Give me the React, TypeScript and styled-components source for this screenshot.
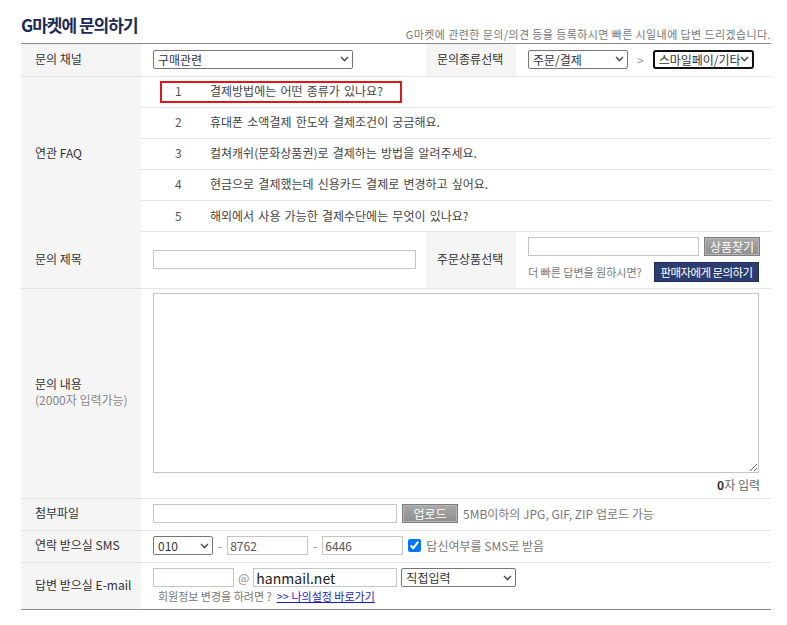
import React from 'react';
import styled, { createGlobalStyle } from 'styled-components';

const Global = createGlobalStyle`
  body {
    margin: 0;
    background: #fff;
    font-family: "Noto Sans CJK KR", "Noto Sans", sans-serif;
    font-size: 12px;
    color: #333;
  }
`;

const Page = styled.div`
  width: 750px;
  margin-left: 21px;
  padding-top: 14px;
`;

const Header = styled.div`
  height: 29px;
  display: flex;
  align-items: flex-end;
  justify-content: space-between;
`;

const Title = styled.h1`
  margin: 0 0 8px;
  font-size: 17px;
  line-height: 20px;
  font-weight: 700;
  letter-spacing: -1px;
  color: #1c2b52;
`;

const Notice = styled.p`
  margin: 0 0 2px;
  font-size: 11px;
  line-height: 14px;
  color: #777;
  letter-spacing: 0.4px;
  white-space: nowrap;
`;

const Form = styled.div`
  border-top: 1px solid #8a8a8a;
  border-bottom: 1px solid #8a8a8a;
`;

const Row = styled.div<{ $h: number; $split?: boolean; $last?: boolean }>`
  display: grid;
  grid-template-columns: ${(p) => (p.$split ? '120px 285px 90px 255px' : '120px 630px')};
  height: ${(p) => p.$h}px;
  box-sizing: border-box;
  border-bottom: ${(p) => (p.$last ? 'none' : '1px solid #e3e3e3')};
`;

const Label = styled.div<{ $pad?: number }>`
  background: #f5f5f5;
  display: flex;
  flex-direction: column;
  justify-content: center;
  padding-left: ${(p) => p.$pad ?? 14}px;
  padding-bottom: 3px;
  color: #333;
  line-height: 16px;
`;

const SubLabel = styled.span`
  color: #888;
`;

const Cell = styled.div<{ $col?: boolean; $gap?: number; $top?: number }>`
  display: flex;
  flex-direction: ${(p) => (p.$col ? 'column' : 'row')};
  justify-content: ${(p) => (p.$top !== undefined ? 'flex-start' : p.$col ? 'center' : 'flex-start')};
  align-items: ${(p) => (p.$col ? 'flex-start' : 'center')};
  padding-left: 12px;
  padding-top: ${(p) => p.$top ?? 0}px;
  padding-bottom: ${(p) => (p.$top !== undefined ? 0 : 2)}px;
  gap: ${(p) => p.$gap ?? 5}px;
  min-width: 0;
`;

const Line = styled.div<{ $w?: number; $gap?: number }>`
  display: flex;
  align-items: center;
  justify-content: ${(p) => (p.$w ? 'space-between' : 'flex-start')};
  width: ${(p) => (p.$w ? `${p.$w}px` : 'auto')};
  gap: ${(p) => p.$gap ?? 5}px;
  white-space: nowrap;
`;

const SelectBox = styled.div<{ $w: number; $focus?: boolean }>`
  width: ${(p) => p.$w}px;
  height: 19px;
  box-sizing: border-box;
  display: flex;
  align-items: center;
  justify-content: space-between;
  padding: 0 3px 0 4px;
  border: ${(p) => (p.$focus ? '2px solid #111' : '1px solid #767676')};
  border-radius: ${(p) => (p.$focus ? 3 : 2)}px;
  background: #fff;
  color: #333;
  font-size: 12px;
  overflow: hidden;
  white-space: nowrap;
`;

const SelectText = styled.span`
  overflow: hidden;
  flex: 1;
  min-width: 0;
`;

const Chevron = () => (
  <svg width="9" height="6" viewBox="0 0 9 6" style={{ flex: 'none' }}>
    <path d="M1 1l3.5 3.5L8 1" fill="none" stroke="#555" strokeWidth="1.6" />
  </svg>
);

const Select = ({ w, value, focus }: { w: number; value: string; focus?: boolean }) => (
  <SelectBox $w={w} $focus={focus}>
    <SelectText>{value}</SelectText>
    <Chevron />
  </SelectBox>
);

const Input = styled.input<{ $w: number; $big?: boolean }>`
  width: ${(p) => p.$w}px;
  height: 19px;
  box-sizing: border-box;
  margin: 0;
  padding: 0 2px;
  border: 1px solid #c4c4c4;
  font-family: inherit;
  font-size: ${(p) => (p.$big ? 14 : 12)}px;
  color: ${(p) => (p.$big ? '#222' : '#555')};
  outline: none;
`;

const GrayButton = styled.button<{ $w: number }>`
  width: ${(p) => p.$w}px;
  height: 19px;
  margin: 0;
  padding: 0;
  border: 1px solid #7d7d7d;
  box-shadow: inset 0 0 0 1px #b5b5b5;
  background: linear-gradient(#a9a9a9, #8d8d8d);
  color: #fff;
  font-family: inherit;
  font-size: 12px;
`;

const NavyButton = styled.button`
  width: 105px;
  height: 20px;
  margin: 0;
  padding: 0;
  border: 1px solid #1f2c57;
  background: #2d3c6e;
  color: #fff;
  font-family: inherit;
  font-size: 11.5px;
  letter-spacing: -0.6px;
  white-space: nowrap;
`;

const Muted = styled.span<{ $size?: number }>`
  color: #777;
  font-size: ${(p) => p.$size ?? 12}px;
`;

const Dash = styled.span`
  color: #888;
`;

const Arrow = styled.span`
  color: #999;
  margin: 0 4px;
`;

const FaqList = styled.ul`
  list-style: none;
  margin: 0;
  padding: 0;
`;

const FaqItem = styled.li<{ $last?: boolean }>`
  height: 31px;
  box-sizing: border-box;
  display: flex;
  align-items: center;
  padding-left: 19px;
  padding-bottom: 1px;
  border-bottom: ${(p) => (p.$last ? 'none' : '1px solid #e3e3e3')};
`;

const FaqBox = styled.div<{ $active?: boolean }>`
  display: flex;
  align-items: center;
  height: 22px;
  box-sizing: border-box;
  padding: 0 17px 2px 13px;
  border: 2px solid ${(p) => (p.$active ? '#e0161b' : 'transparent')};
  color: #444;
  word-spacing: 1.5px;
`;

const FaqNum = styled.span`
  width: 35px;
  color: #555;
`;

const TextArea = styled.textarea`
  width: 606px;
  height: 180px;
  box-sizing: border-box;
  margin: 0;
  border: 1px solid #c4c4c4;
  font-family: inherit;
  outline: none;
`;

const Counter = styled.div`
  width: 607px;
  text-align: right;
  color: #666;
  b {
    color: #333;
  }
`;

const Check = styled.input`
  width: 13px;
  height: 13px;
  margin: 0;
  accent-color: #0075ff;
`;

const Link = styled.a`
  color: #1a1ac8;
  text-decoration: underline;
  font-size: 11px;
`;

const faqs = [
  '결제방법에는 어떤 종류가 있나요?',
  '휴대폰 소액결제 한도와 결제조건이 궁금해요.',
  '컬쳐캐쉬(문화상품권)로 결제하는 방법을 알려주세요.',
  '현금으로 결제했는데 신용카드 결제로 변경하고 싶어요.',
  '해외에서 사용 가능한 결제수단에는 무엇이 있나요?',
];

export default function App() {
  return (
    <Page>
      <Global />
      <Header>
        <Title>G마켓에 문의하기</Title>
        <Notice>G마켓에 관련한 문의/의견 등을 등록하시면 빠른 시일내에 답변 드리겠습니다.</Notice>
      </Header>
      <Form>
        <Row $h={33} $split>
          <Label>문의 채널</Label>
          <Cell>
            <Select w={200} value="구매관련" />
          </Cell>
          <Label $pad={11}>문의종류선택</Label>
          <Cell>
            <Select w={100} value="주문/결제" />
            <Arrow>&gt;</Arrow>
            <Select w={101} value="스마일페이/기타" focus />
          </Cell>
        </Row>
        <Row $h={155}>
          <Label>연관 FAQ</Label>
          <FaqList>
            {faqs.map((q, i) => (
              <FaqItem key={q} $last={i === faqs.length - 1}>
                <FaqBox $active={i === 0}>
                  <FaqNum>{i + 1}</FaqNum>
                  {q}
                </FaqBox>
              </FaqItem>
            ))}
          </FaqList>
        </Row>
        <Row $h={57} $split>
          <Label>문의 제목</Label>
          <Cell>
            <Input $w={263} />
          </Cell>
          <Label $pad={11}>주문상품선택</Label>
          <Cell $col $gap={6}>
            <Line>
              <Input $w={171} />
              <GrayButton $w={56}>상품찾기</GrayButton>
            </Line>
            <Line $w={231}>
              <Muted $size={11}>더 빠른 답변을 원하시면?</Muted>
              <NavyButton>판매자에게 문의하기</NavyButton>
            </Line>
          </Cell>
        </Row>
        <Row $h={210}>
          <Label>
            문의 내용
            <SubLabel>(2000자 입력가능)</SubLabel>
          </Label>
          <Cell $col $gap={3} $top={4}>
            <TextArea />
            <Counter>
              <b>0</b>자 입력
            </Counter>
          </Cell>
        </Row>
        <Row $h={32}>
          <Label>첨부파일</Label>
          <Cell>
            <Input $w={244} />
            <GrayButton $w={56}>업로드</GrayButton>
            <Muted>5MB이하의 JPG, GIF, ZIP 업로드 가능</Muted>
          </Cell>
        </Row>
        <Row $h={32}>
          <Label>연락 받으실 SMS</Label>
          <Cell>
            <Select w={60} value="010" />
            <Dash>-</Dash>
            <Input $w={81} defaultValue="8762" />
            <Dash>-</Dash>
            <Input $w={81} defaultValue="6446" />
            <Check type="checkbox" defaultChecked />
            <Muted>답신여부를 SMS로 받음</Muted>
          </Cell>
        </Row>
        <Row $h={46} $last>
          <Label>답변 받으실 E-mail</Label>
          <Cell $col $gap={1} $top={5}>
            <Line $gap={4}>
              <Input $w={81} />
              <Dash>@</Dash>
              <Input $w={144} $big defaultValue="hanmail.net" />
              <Select w={115} value="직접입력" />
            </Line>
            <Line>
              <Muted $size={11}>&nbsp;&nbsp;회원정보 변경을 하려면 ?</Muted>
              <Link href="#">&gt;&gt; 나의설정 바로가기</Link>
            </Line>
          </Cell>
        </Row>
      </Form>
    </Page>
  );
}
